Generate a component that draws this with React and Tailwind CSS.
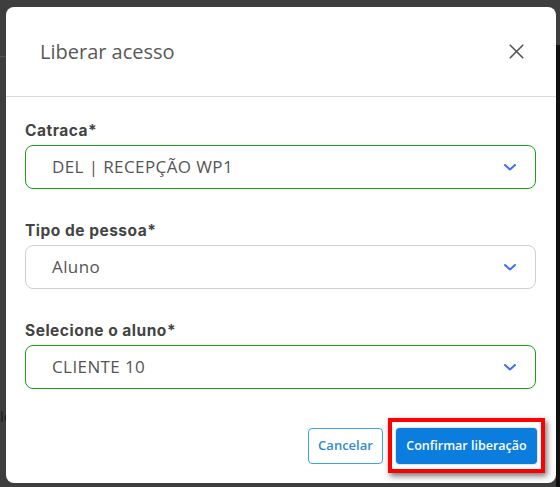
import { X } from "lucide-react";

const fields = [
  { label: "Catraca*", value: "DEL | RECEPÇÃO WP1", valid: true },
  { label: "Tipo de pessoa*", value: "Aluno", valid: false },
  { label: "Selecione o aluno*", value: "CLIENTE 10", valid: true },
];

function Chevron() {
  return (
    <svg viewBox="0 0 12 7" className="h-[7px] w-[12px]" fill="none" stroke="#3d6ff0" strokeWidth="2">
      <path d="M1 1l5 4.5 5-4.5" strokeLinecap="round" strokeLinejoin="round" />
    </svg>
  );
}

export default function App() {
  return (
    <div className="relative h-[487px] w-[560px] overflow-hidden bg-[#3e3e3e] font-['Open_Sans',sans-serif]">
      {/* page behind the overlay */}
      <div className="absolute left-0 top-[56px] h-px w-[6px] bg-[#555]" />
      <div className="absolute left-0 top-[405px] text-[15px] text-[#1b1b1b]">lo</div>
      <div className="absolute right-0 top-[45px] h-[442px] w-[4px] bg-[#111]" />

      <div className="relative ml-[6px] mt-[7px] flex h-[476px] w-[550px] flex-col rounded-[8px] bg-white">
        <div className="flex h-[90px] items-center justify-between border-b border-[#dcdcdc] pl-[34px] pr-[27px]">
          <h2 className="text-[20px] text-[#595959]">Liberar acesso</h2>
          <X className="h-[25px] w-[25px] text-[#555]" strokeWidth={1.6} />
        </div>

        <div className="flex flex-col px-[19px] pt-[23px]">
          {fields.map((f, i) => (
            <div key={f.label} className={i > 0 ? "mt-[31px]" : ""}>
              <div className="h-[22px] font-['Inter',sans-serif] text-[15.5px] font-bold leading-[22px] tracking-[0.5px] text-[#444]">
                {f.label}
              </div>
              <div
                className={`mt-[3px] flex h-[44px] w-[511px] items-center justify-between rounded-[8px] border pl-[26px] pr-[19px] ${
                  f.valid ? "border-[#14a514]" : "border-[#cfcfcf]"
                }`}
              >
                <span className="text-[17px] tracking-[0.4px] text-[#555]">{f.value}</span>
                <Chevron />
              </div>
            </div>
          ))}
        </div>

        <div className="mt-auto flex justify-end gap-[13px] pb-[19px] pr-[19px]">
          <button className="h-[36px] w-[75px] rounded-[4px] border border-[#3aa0f0] text-[13px] font-semibold text-[#2e8ad8]">
            Cancelar
          </button>
          <div className="relative">
            <div className="absolute -bottom-[9px] -left-[8px] -right-[8px] -top-[10px] border-[4px] border-[#ff0000] shadow-[2px_3px_6px_rgba(0,0,0,0.55)]" />
            <button className="relative h-[36px] w-[141px] rounded-[4px] bg-[#0b7ddf] text-[12.5px] font-semibold text-white shadow-[0_0_2px_rgba(0,0,0,0.4)]">
              Confirmar liberação
            </button>
          </div>
        </div>
      </div>
    </div>
  );
}
